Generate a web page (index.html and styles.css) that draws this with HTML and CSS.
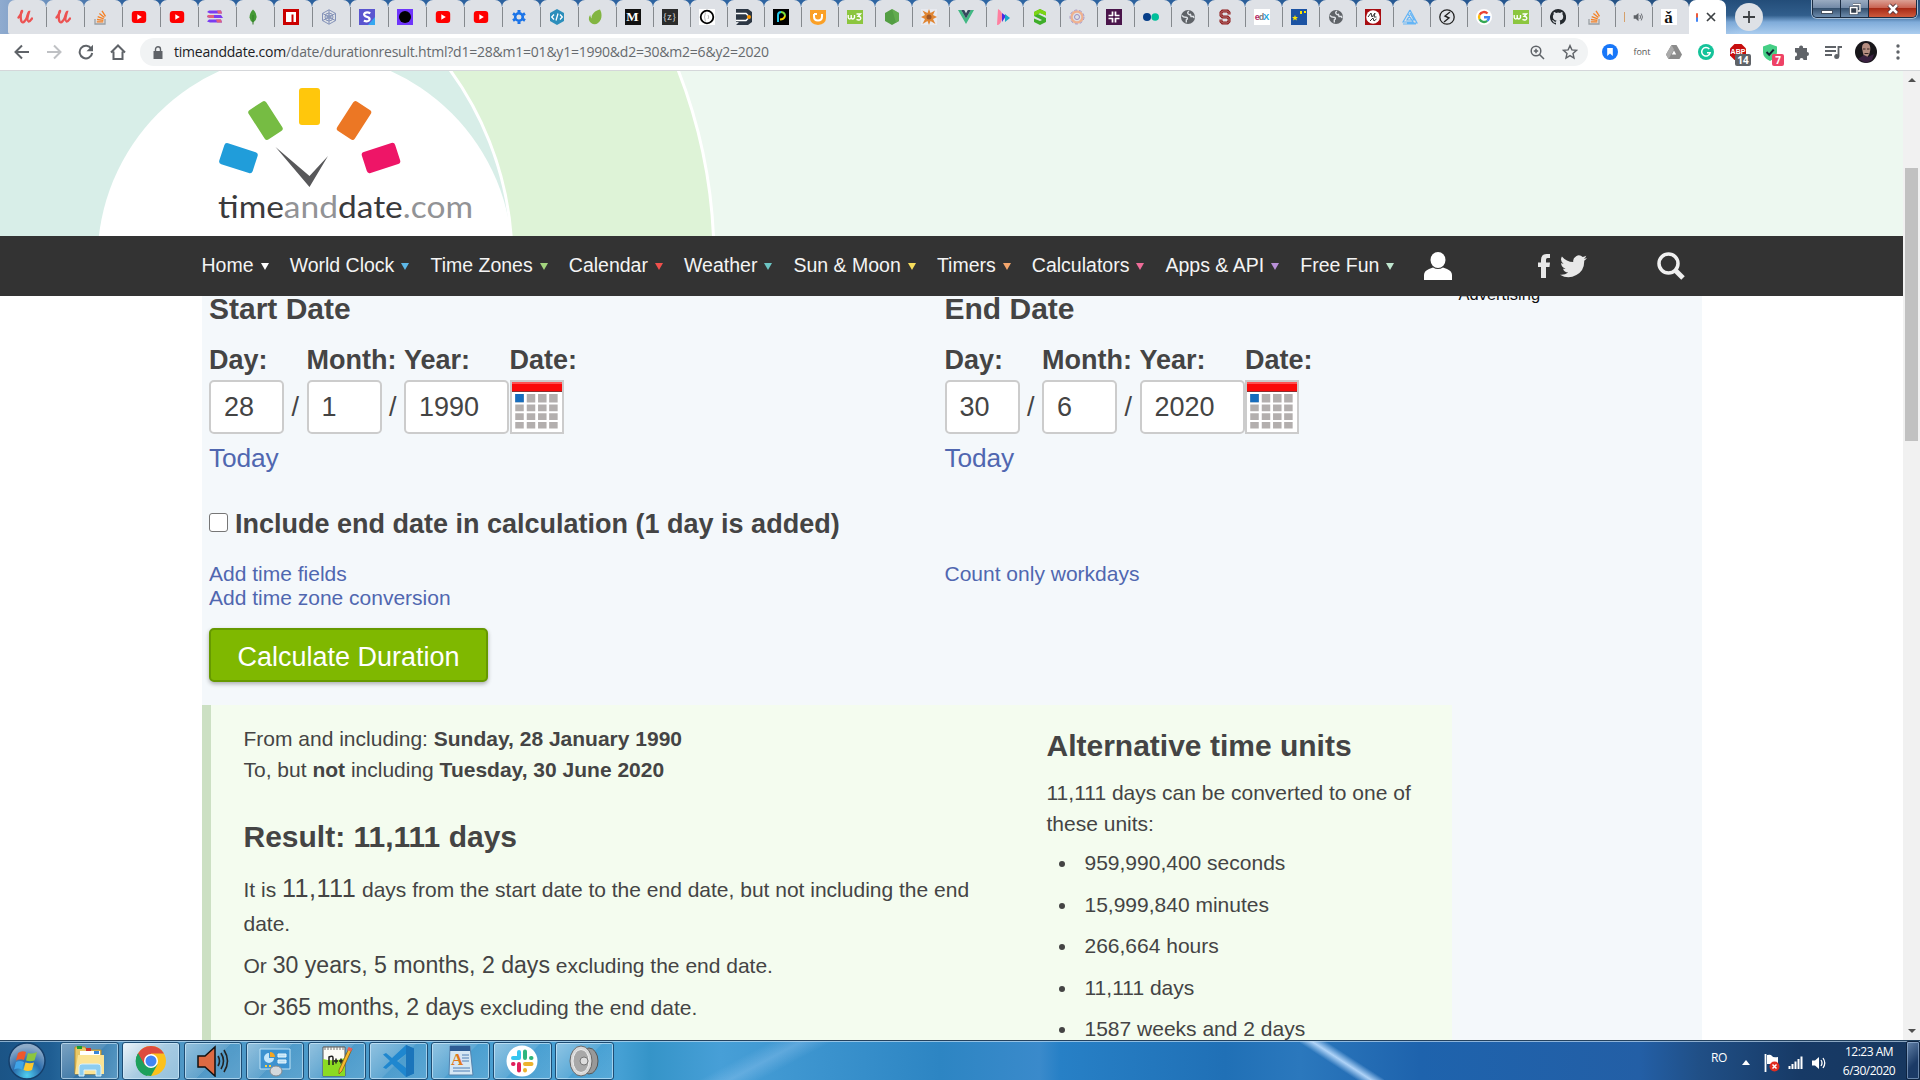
FILE: index.html
```html
<!DOCTYPE html>
<html lang="en">
<head>
<meta charset="utf-8">
<title>Date Duration Calculator</title>
<link rel="stylesheet" href="styles.css">
</head>
<body>
<svg class="sprite" width="0" height="0">
  <symbol id="udemy" viewBox="0 0 16 16"><path d="M1.500 8.500C4 5.500 5.500 2 5 1.800 4 1.800 3 9 4.500 12.500 6 15 9 11 10 8 11 5 11.500 3 12 3c-1.500 5-2 9-.5 9.500 1.500.3 2.500-1.500 3.500-3" fill="none" stroke="#ec5252" stroke-width="2.300" stroke-linecap="round"/></symbol>
  <symbol id="so" viewBox="0 0 16 16"><path d="M2 10v5h10v-5" fill="none" stroke="#9a9fa4" stroke-width="1.300"/><path d="M3.800 12.800h6.500M4 10.500l6.400.8M4.700 7.700l6 2.100M6.400 4.600l5 4M9 1.800l3.500 5.500" stroke="#f48024" stroke-width="1.300"/></symbol>
  <symbol id="yt" viewBox="0 0 16 16"><rect x=".8" y="2" width="14.400" height="12" rx="3" fill="#f00"/><path d="M6.300 5.300v5.400L10.800 8z" fill="#fff"/></symbol>
  <symbol id="w3" viewBox="0 0 16 16"><path d="M0 1h16v14H0z" fill="#8cc63f"/><path d="M1.200 6v2.500q.2 1.500 1.500 1.500T4.200 8.500V6v2.500Q4.500 10 5.700 10T7.500 8.500V6M9.500 5h4L11.200 7.300q2.800 0 2.500 2.400-1.200 2.300-4.200.6" fill="none" stroke="#fff" stroke-width="1.400"/></symbol>
  <symbol id="globe" viewBox="0 0 16 16"><circle cx="8" cy="8" r="7" fill="#5f6368"/><path d="M2 6.500q1.500 2 4 1.800 1.800 0 1.300 1.700l-1 .8v2.700M9 2.200q-2 1-1 2.500t2.500.8l.5 2h2.500l.5 1.500" fill="none" stroke="#dee1e6" stroke-width="1.400"/></symbol>
  <symbol id="vol" viewBox="0 0 16 16"><path d="M1 5.500h3L8 2v12l-4-3.500H1z" fill="currentColor"/><path d="M10 5q2 3 0 6M12 3q3.500 5 0 10" fill="none" stroke="currentColor" stroke-width="1.300"/></symbol>
</svg>

<div class="tabstrip">
  <div class="tabs">
    <div class="tab first"><svg class="fav"><use href="#udemy"/></svg></div>
    <div class="tab"><svg class="fav"><use href="#udemy"/></svg></div>
    <div class="tab"><svg class="fav"><use href="#so"/></svg></div>
    <div class="tab"><svg class="fav"><use href="#yt"/></svg></div>
    <div class="tab"><svg class="fav"><use href="#yt"/></svg></div>
    <div class="tab"><svg class="fav" viewBox="0 0 16 16"><path d="M2 1.500h12l1 3H3L0 3zM1 6h13l2 3H3L0 8zM2 10.500h12l1 3H3l-3-1z" fill="#7a3cf0"/><path d="M10 1.500h4l1 3h-4zM1 6h6v3H3L0 8zM9 10.500h5l1 3h-5z" fill="#e0607e"/></svg></div>
    <div class="tab"><svg class="fav" viewBox="0 0 16 16"><path d="M8 .5Q12 4 11.500 8.500 11 12 8 13.500 5 12 4.500 8.500 4.500 4 8 .5" fill="#439934"/><path d="M8 6v9.500" stroke="#337b28"/></svg></div>
    <div class="tab"><svg class="fav" viewBox="0 0 16 16"><path d="M0 0h16v16H0z" fill="#cb0000"/><path d="M3 3h10v10h-2.500V5.500H8.500V13H3z" fill="#fff"/></svg></div>
    <div class="tab"><svg class="fav" viewBox="0 0 16 16" fill="none" stroke="#8492b8"><path d="M8 .8l6.500 3.600v7.200L8 15.200l-6.500-3.600V4.400zM1.500 4.400l13 7.200M14.500 4.400l-13 7.200M8 .8v14.400"/><circle cx="8" cy="8" r="4"/><circle cx="8" cy="8" r="2"/></svg></div>
    <div class="tab"><svg class="fav" viewBox="0 0 16 16"><path d="M0 0h16v16H0z" fill="#5a55d0"/><path d="M9 16l7-8v8z" fill="#35a7f0"/><path d="M11.300 4.200Q8 2.500 6 4T6.500 7.300l3 1.200q2 1.500.5 3t-5.200.3" fill="none" stroke="#fff" stroke-width="2.200"/></svg></div>
    <div class="tab"><svg class="fav" viewBox="0 0 16 16"><path d="M0 0h16v16H0z" fill="#6f35fb"/><circle cx="8" cy="8" r="6"/></svg></div>
    <div class="tab"><svg class="fav"><use href="#yt"/></svg></div>
    <div class="tab"><svg class="fav"><use href="#yt"/></svg></div>
    <div class="tab"><svg class="fav" viewBox="0 0 16 16" fill="none" stroke="#1a73e8"><circle cx="8" cy="8" r="3.800" stroke-width="2.600"/><path d="M8 1v2.500M8 12.500V15M2 4.500l2 1.200M12 10.300l2 1.200M2 11.500l2-1.200M12 5.700l2-1.200" stroke-width="3"/></svg></div>
    <div class="tab"><svg class="fav" viewBox="0 0 16 16"><path d="M8 0l7 4v8l-7 4-7-4V4z" fill="#2c8ebb"/><path d="M5 5.500L2.700 8 5 10.500M11 5.500L13.300 8 11 10.500M9 4.500l-2 7" fill="none" stroke="#fff" stroke-width="1.300"/></svg></div>
    <div class="tab"><svg class="fav" viewBox="0 0 16 16"><path d="M13 0.500c2.500 4.500 2 10.500-2 13.500-3 2.500-8 .8-9-3-.5-3 .8-4.500 1.200-5 .3 1.500.6 2.500 1.300 3.500C4.500 5 8 1.500 13 .5" fill="#82b541"/></svg></div>
    <div class="tab"><span class="fav fav-m">M</span></div>
    <div class="tab"><span class="fav fav-z">{z}</span></div>
    <div class="tab"><svg class="fav" viewBox="0 0 16 16"><path d="M0 0h16v16H0z" fill="#fff"/><circle cx="8" cy="8" r="6.300" fill="none" stroke="#000" stroke-width="1.800"/><path d="M6.500 3.500Q4.500 8 6.500 12.500M9 6q1.500 2 0 4" fill="none" stroke="#bbb"/></svg></div>
    <div class="tab"><svg class="fav" viewBox="0 0 16 16"><path d="M0 0h12l4 3v10l-4 3H0l3-3H0z" fill="#2d3744"/><path d="M0 4.500h10l2 2M0 11.500h10l2-2" fill="none" stroke="#fff" stroke-width="1.500"/><circle cx="13" cy="8" r="2" fill="#f90"/></svg></div>
    <div class="tab"><svg class="fav" viewBox="0 0 16 16"><path d="M0 0h16v16H0z"/><path d="M5 13V6q0-3 3.500-3" fill="none" stroke="#24c6e8" stroke-width="2"/><path d="M8 3q4 .5 4 4" fill="none" stroke="#7ddc3a" stroke-width="2"/><path d="M12 7q-1 3.500-5 3.500" fill="none" stroke="#f8d400" stroke-width="2"/></svg></div>
    <div class="tab"><svg class="fav" viewBox="0 0 16 16"><path d="M0 1h16v8q0 6-8 7-8-1-8-7z" fill="#fba026"/><path d="M4 5v2.500q0 4 4 4t4-4V5M4 5h3" fill="none" stroke="#fff" stroke-width="2"/></svg></div>
    <div class="tab"><svg class="fav"><use href="#w3"/></svg></div>
    <div class="tab"><svg class="fav" viewBox="0 0 16 16"><path d="M8 0l7 4v8l-7 4-7-4V4z" fill="#539e43"/><path d="M8 0l7 4v8l-3 1.700z" fill="#6cb457" opacity=".6"/></svg></div>
    <div class="tab"><svg class="fav" viewBox="0 0 16 16"><path d="M0 0h16v16H0z" fill="#e8eaf0"/><path d="M8 0l1.500 4L14 1.500 12 6l4 2-4 2 2.500 5L9.500 12 8 16l-1.500-4L1.500 15 4 10 0 8l4-2L1.500 1.500 6.500 4z" fill="#e08532"/><circle cx="8" cy="8" r="2.500" fill="#9e5626"/></svg></div>
    <div class="tab"><svg class="fav" viewBox="0 0 16 16"><path d="M0 1h3.200L8 9.500 12.800 1H16L8 15z" fill="#41b883"/><path d="M3.200 1H6.200L8 4.300 9.800 1h3L8 9.500z" fill="#35495e"/></svg></div>
    <div class="tab"><svg class="fav" viewBox="0 0 16 16"><path d="M3 0q5 2 4 10-1.500 6-5 6z" fill="#ff7fa0"/><path d="M7 4l4 3-4 6z" fill="#4b2ee0"/><path d="M10 5l5 4-5 4z" fill="#16a7c9"/></svg></div>
    <div class="tab"><svg class="fav" viewBox="0 0 16 16"><path d="M8 0l6 3v3.500L8 4 6 5l8 4v4l-6 3-6-3V9.500L8 12l2-1-8-4V3z" fill="#3fae2a"/><path d="M8 0l6 3v3.500L8 4 2 7V3z" fill="#7dd414"/></svg></div>
    <div class="tab"><svg class="fav" viewBox="0 0 16 16" fill="none"><circle cx="8" cy="8" r="5.500" stroke="#efb190" stroke-width="2.400"/><circle cx="8" cy="8" r="7" stroke="#a99ac8" stroke-dasharray="3 2"/><circle cx="8" cy="8" r="2.500" stroke="#9c8cc0"/></svg></div>
    <div class="tab"><svg class="fav" viewBox="0 0 16 16"><path d="M0 0h16v16H0z" fill="#4a154b"/><path d="M6.500 2.500V7M9.500 9v4.500M9.500 2.500V7M6.500 9v4.500M2.500 6.500H7M9 9.500h4.500M9 6.500h4.500M2.500 9.500H7" stroke="#fff" stroke-width="1.700"/></svg></div>
    <div class="tab"><svg class="fav" viewBox="0 0 16 16"><circle cx="4" cy="8" r="4" fill="#063e89"/><circle cx="12.200" cy="8" r="3.800" fill="#00bf9a"/></svg></div>
    <div class="tab"><svg class="fav"><use href="#globe"/></svg></div>
    <div class="tab"><svg class="fav" viewBox="0 0 16 16"><path d="M12 5.500V3.500L10.500 2h-5L4 3.500v3L5.500 8h5L12 9.500v3L10.500 14h-5L4 12.500v-2" fill="none" stroke="#8c1515" stroke-width="3"/><path d="M12 5.500V3.500L10.500 2h-5L4 3.500v3L5.500 8h5L12 9.500v3L10.500 14h-5L4 12.500v-2" fill="none" stroke="#d9c6c8" stroke-width=".6"/></svg></div>
    <div class="tab"><span class="fav fav-edx"><i>e</i><b>d</b><u>X</u></span></div>
    <div class="tab"><svg class="fav" viewBox="0 0 16 16"><path d="M0 0h16v16H0z" fill="#1c53a3"/><path d="M4 6l.8 2H7L5.300 9.400 6 11.500 4 10.200 2 11.500l.7-2.100L1 8h2.200zM9 2h2v3H9zM13 2h2v2h-2z" fill="#ffe600"/></svg></div>
    <div class="tab"><svg class="fav"><use href="#globe"/></svg></div>
    <div class="tab"><svg class="fav" viewBox="0 0 16 16"><path d="M0 0h16v16H0z" fill="#a80d12"/><circle cx="8" cy="8" r="6.800" fill="#fff"/><path d="M3 8l3-4 1 4 3-4-1 4h2.500M5 12l3-3 1 3 2.500-2" fill="none" stroke="#333" stroke-width="1"/></svg></div>
    <div class="tab"><svg class="fav" viewBox="0 0 16 16" fill="none" stroke="#64b5f6" stroke-width="1.200"><path d="M8 1L1 13h10L6 5M8 1l7 13H5M8 6l-3 5h7L8 4M1 15h13"/></svg></div>
    <div class="tab"><svg class="fav" viewBox="0 0 16 16" fill="none" stroke="#222"><circle cx="8" cy="8" r="7.200" stroke-width="1.300"/><path d="M11 3L6 7l4 2-5 4" stroke-width="1.400"/></svg></div>
    <div class="tab"><svg class="fav" viewBox="0 0 16 16" fill="none" stroke-width="2.400"><circle cx="8" cy="8" r="8" fill="#fff"/><path d="M11.500 4.500A5 5 0 003.600 5.700" stroke="#ea4335"/><path d="M3.600 5.700a5 5 0 000 4.600" stroke="#fbbc05"/><path d="M3.600 10.300a5 5 0 007.600 1.500" stroke="#34a853"/><path d="M11.200 11.800Q13 10.500 13 8.200H8" stroke="#4285f4"/></svg></div>
    <div class="tab"><svg class="fav"><use href="#w3"/></svg></div>
    <div class="tab"><svg class="fav" viewBox="0 0 16 16"><path d="M8 0a8 8 0 00-2.500 15.600c.4.100.5-.2.500-.4v-1.500c-2.200.5-2.700-1-2.700-1-.4-.9-.9-1.200-.9-1.200-.7-.5.1-.5.100-.5.800.1 1.200.8 1.200.8.700 1.300 1.900.9 2.400.7 0-.5.200-.9.500-1.100-1.800-.2-3.700-.9-3.700-4 0-.9.300-1.600.9-2.200-.1-.2-.4-1 .1-2.100 0 0 .7-.2 2.200.8a7.500 7.500 0 014 0c1.500-1 2.200-.8 2.200-.8.400 1.100.1 1.900.1 2.100.5.600.8 1.300.8 2.200 0 3.100-1.900 3.700-3.700 3.900.3.300.6.800.6 1.500v2.400c0 .2.100.5.500.4A8 8 0 008 0" fill="#24292e"/></svg></div>
    <div class="tab"><svg class="fav"><use href="#so"/></svg></div>
    <div class="tab audio"><i class="sliver"></i><svg class="volume" width="11" height="12"><use href="#vol"/></svg></div>
    <div class="tab"><span class="fav fav-a">ǎ</span></div>
    <div class="tab active"><i class="arc"></i><svg width="10" height="10" viewBox="0 0 10 10"><path d="M1 1l8 8M9 1L1 9" stroke="#3c4043" stroke-width="1.700"/></svg></div>
  </div>
  <div class="newtab"><svg width="12" height="12" viewBox="0 0 12 12"><path d="M6 0v12M0 6h12" stroke="#3c4043" stroke-width="1.800"/></svg></div>
  <div class="winctl">
    <span class="wbtn min"><i></i></span>
    <span class="wbtn max"><svg width="12" height="12" viewBox="0 0 12 12" fill="none"><path d="M4 1.500h7v6.500H9M1.500 4.500H8v6H1.500zM4 6.700h1.600v1.600H4z" stroke="#333e4d" stroke-width="2.500"/><path d="M4 1.500h7v6.500H9M1.500 4.500H8v6H1.500z" stroke="#fff" stroke-width="1.400"/></svg></span>
    <span class="wbtn close"><svg width="14" height="12" viewBox="0 0 14 12"><path d="M3 2l8 8M11 2l-8 8" stroke="#53333a" stroke-width="4.500"/><path d="M3 2l8 8M11 2l-8 8" stroke="#fff" stroke-width="2.500"/></svg></span>
  </div>
</div>

<div class="toolbar">
  <div class="navbtns">
    <svg width="16" height="16" viewBox="0 0 16 16" fill="none" stroke="#5f6368" stroke-width="2"><path d="M15 8H2M8 1.500L1.500 8 8 14.500"/></svg>
    <svg width="16" height="16" viewBox="0 0 16 16" fill="none" stroke="#bfc1c4" stroke-width="2"><path d="M1 8h13M8 1.500L14.500 8 8 14.500"/></svg>
    <svg width="16" height="16" viewBox="0 0 16 16"><path d="M13.300 4.700A6.300 6.300 0 1014.200 9" fill="none" stroke="#5f6368" stroke-width="2"/><path d="M15 .8v6.500H8.500z" fill="#5f6368"/></svg>
    <svg width="16" height="16" viewBox="0 0 16 16" fill="none" stroke="#5f6368" stroke-width="2"><path d="M1 8.500l7-7 7 7M3.500 7.500V15h9V7.500"/></svg>
  </div>
  <div class="omnibox">
    <svg class="lock" width="10" height="13" viewBox="0 0 10 13"><path d="M.5 5h9v8h-9z" fill="#5f6368"/><path d="M2.500 5V3.300a2.500 2.500 0 015 0V5" fill="none" stroke="#5f6368" stroke-width="1.400"/></svg>
    <span class="url"><b>timeanddate.com</b>/date/durationresult.html?d1=28&amp;m1=01&amp;y1=1990&amp;d2=30&amp;m2=6&amp;y2=2020</span>
    <svg width="15" height="15" viewBox="0 0 15 15" fill="none" stroke="#5f6368" stroke-width="1.500"><circle cx="6" cy="6" r="4.800"/><path d="M9.500 9.500l4.500 4.500M6 3.800v4.400M3.800 6h4.400"/></svg>
    <svg class="star" width="16" height="16" viewBox="0 0 16 16"><path d="M8 1.600l1.900 4.300 4.600.4L11 9.400l1 4.600-4-2.400L4 14l1-4.600L1.500 6.300l4.600-.4z" fill="none" stroke="#5f6368" stroke-width="1.400"/></svg>
  </div>
  <div class="extensions">
    <span class="ext"><svg width="16" height="16" viewBox="0 0 16 16"><circle cx="8" cy="8" r="8" fill="#1877f9"/><path d="M5.200 4h5.600v8L8 9.500 5.200 12z" fill="#fff"/></svg></span>
    <span class="ext fontext">font</span>
    <span class="ext"><svg width="16" height="14" viewBox="0 0 16 14"><path d="M5.500 0h5L16 9.500 13.500 14h-11L0 9.500z" fill="#8b8b8b"/><path d="M5.500 0L0 9.500 2.500 14 8 4.500z" fill="#aaa"/><path d="M8 5.500l2.200 4H5.800z" fill="#fff"/></svg></span>
    <span class="ext"><svg width="16" height="16" viewBox="0 0 16 16"><circle cx="8" cy="8" r="8" fill="#15c39a"/><path d="M11.300 5A4.300 4.300 0 1012.200 8.800H9" fill="none" stroke="#fff" stroke-width="1.500"/></svg></span>
    <span class="ext"><svg width="18" height="16" viewBox="0 0 18 16"><path d="M5.500 0h7L17 4.500v7L12.500 16h-7L1 11.500v-7z" fill="#c70d0d"/><text x="9" y="10" class="abp">ABP</text></svg><em class="badge grey">14</em></span>
    <span class="ext"><svg width="16" height="17" viewBox="0 0 16 17"><path d="M1 2.500L8 0l7 2.500V8q0 6-7 9-7-3-7-9z" fill="#45cf85"/><path d="M4.500 8l2.700 2.700 4.500-5" fill="none" stroke="#123" stroke-width="2"/></svg><em class="badge pink">7</em></span>
    <span class="ext"><svg width="16" height="16" viewBox="0 0 16 16"><path d="M1 4h4.200a2 2 0 113.800 0H13v4a2 2 0 110 4v4H9.500a2 2 0 10-4 0H1v-3.500a2 2 0 100-4.200z" fill="#5f6368"/></svg></span>
    <span class="ext"><svg width="18" height="15" viewBox="0 0 18 15"><path d="M0 2h11M0 6h11M0 10h7M13.500 11.500V2H17" fill="none" stroke="#5f6368" stroke-width="1.800"/><circle cx="11.700" cy="11.500" r="2.500" fill="#5f6368"/></svg></span>
    <span class="ext"><svg width="22" height="22" viewBox="0 0 22 22"><circle cx="11" cy="11" r="11" fill="#18161a"/><path d="M7 7q0-5 4-5t4.300 5-3 9-5.300-9" fill="#b58d80"/><path d="M3 18l6-4 4 2 6-3-2 6-6 3z" fill="#3a2140"/><path d="M8 8h2.500M12 8h2.500M9.500 12.500h4" stroke="#372623"/></svg></span>
    <span class="ext"><svg width="4" height="16" viewBox="0 0 4 16" fill="#5f6368"><circle cx="2" cy="2" r="1.700"/><circle cx="2" cy="8" r="1.700"/><circle cx="2" cy="14" r="1.700"/></svg></span>
  </div>
</div>

<div class="viewport">
  <div class="page">
    <header class="banner">
      <svg width="1903" height="165" viewBox="0 71 1903 165">
        <path d="M0 71h1903v165H0z" fill="#edf8f0"/>
        <circle cx="193" cy="260" r="521" fill="#def3d7" stroke="#fff" stroke-width="3"/>
        <circle cx="190" cy="260" r="322" fill="#d8eee8" stroke="#fff" stroke-width="3"/>
        <circle cx="305" cy="260" r="207.500" fill="#fff"/>
        <rect x="299" y="88" width="21" height="37" rx="3" fill="#ffc70c"/>
        <rect x="255" y="103" width="21" height="35" rx="3" fill="#76bc43" transform="rotate(-33 265.500 120.500)"/>
        <rect x="343.500" y="103" width="21" height="35" rx="3" fill="#ec7724" transform="rotate(33 354 120.500)"/>
        <rect x="221" y="147" width="35" height="22" rx="3" fill="#209dda" transform="rotate(18 238 158)"/>
        <rect x="363.500" y="147" width="35" height="22" rx="3" fill="#ee1567" transform="rotate(-18 381 158)"/>
        <path d="M275.500 147l34 29 18.500-20-18.500 31z" fill="#58585a"/>
        <text x="218" y="218" class="logotext" textLength="255" lengthAdjust="spacingAndGlyphs"><tspan class="dark">time</tspan>and<tspan class="dark">date</tspan>.com</text>
      </svg>
    </header>
    <nav class="mainnav">
      <a class="item">Home<i class="c-white"></i></a>
      <a class="item">World Clock<i class="c-blue"></i></a>
      <a class="item">Time Zones<i class="c-green"></i></a>
      <a class="item">Calendar<i class="c-red"></i></a>
      <a class="item">Weather<i class="c-teal"></i></a>
      <a class="item">Sun &amp; Moon<i class="c-yellow"></i></a>
      <a class="item">Timers<i class="c-orange"></i></a>
      <a class="item">Calculators<i class="c-pink"></i></a>
      <a class="item">Apps &amp; API<i class="c-violet"></i></a>
      <a class="item">Free Fun<i class="c-mint"></i></a>
      <svg class="user" width="28" height="28" viewBox="0 0 28 28" fill="#fff"><ellipse cx="14" cy="8" rx="7.500" ry="8"/><path d="M0 28v-5q0-4 5-6l4-1.500q5 3 10 0l4 1.500q5 2 5 6v5z"/></svg>
      <svg class="fb" width="12" height="24" viewBox="0 0 12 24" fill="#e8e8e8"><path d="M3 24V13H0V8.500h3V6q0-6 5.500-6H12v4H9.500Q8 4 8 5.800v2.700h4L11.500 13H8v11z"/></svg>
      <svg class="tw" width="27" height="23" viewBox="0 0 24 20" fill="#e8e8e8"><path d="M24 2.400a10 10 0 01-2.800.8A5 5 0 0023.300.4a10 10 0 01-3.100 1.200 5 5 0 00-8.400 4.500A14 14 0 011.700 1a5 5 0 001.500 6.500 5 5 0 01-2.200-.6 5 5 0 003.900 4.900 5 5 0 01-2.200.1 5 5 0 004.600 3.400A10 10 0 010 17.300 14 14 0 0021.500 4.900 10 10 0 0024 2.400"/></svg>
      <svg class="search" width="28" height="28" viewBox="0 0 28 28" fill="none" stroke="#f0f0f0"><circle cx="11.500" cy="11.500" r="9.500" stroke-width="3.500"/><path d="M18.500 18.500l7.500 7.500" stroke-width="5"/></svg>
    </nav>
    <main class="content">
      <aside class="advert">Advertising</aside>
      <form class="durform">
        <section class="datecol">
          <h2>Start Date</h2>
          <div class="fields">
            <label>Day:</label><label>Month:</label><label>Year:</label><label>Date:</label>
            <span class="box">28</span><span class="box slash">1</span><span class="box slash">1990</span>
            <svg class="cal" width="54" height="54" viewBox="0 0 54 54"><use href="#calendar"/></svg>
          </div>
          <a class="today">Today</a>
        </section>
        <section class="datecol">
          <h2>End Date</h2>
          <div class="fields">
            <label>Day:</label><label>Month:</label><label>Year:</label><label>Date:</label>
            <span class="box">30</span><span class="box slash">6</span><span class="box slash">2020</span>
            <svg class="cal" width="54" height="54" viewBox="0 0 54 54">
              <g id="calendar"><path d="M1 1h52v52H1z" fill="#fff" stroke="#ccc" stroke-width="2"/><path d="M2 2h50v10H2z" fill="#fa0a0a"/><path d="M2 2h50v2H2z" fill="#ff5050"/><path d="M2 11h50v1H2z" fill="#8a2f2f"/>
              <path d="M9.500 14v34.500M21 14v34.500M32.300 14v34.500M43.400 14v34.500" stroke="#b3afae" stroke-width="8.500"/><path d="M5.200 14h8.600v8.500H5.200z" fill="#176dbd"/><path d="M2 23.400h50M2 32.200h50M2 41h50" stroke="#fff" stroke-width="2"/></g>
            </svg>
          </div>
          <a class="today">Today</a>
        </section>
        <div class="include"><i class="check"></i><span>Include end date in calculation (1 day is added)</span></div>
        <div class="links"><a>Add time fields</a><a>Add time zone conversion</a></div>
        <div class="links"><a>Count only workdays</a></div>
        <button class="calc" type="button">Calculate Duration</button>
      </form>
      <section class="result">
        <div class="left">
          <p class="span">From and including: <b>Sunday, 28 January 1990</b><br>To, but <b>not</b> including <b>Tuesday, 30 June 2020</b></p>
          <h2>Result: 11,111 days</h2>
          <p class="line">It is <big>11,111</big> days from the start date to the end date, but not including the end date.</p>
          <p class="line">Or <span class="lg">30 years, 5 months, 2 days</span> excluding the end date.</p>
          <p class="line">Or <span class="lg">365 months, 2 days</span> excluding the end date.</p>
        </div>
        <div class="right">
          <h2>Alternative time units</h2>
          <p>11,111 days can be converted to one of these units:</p>
          <ul>
            <li>959,990,400 seconds</li>
            <li>15,999,840 minutes</li>
            <li>266,664 hours</li>
            <li>11,111 days</li>
            <li>1587 weeks and 2 days</li>
          </ul>
        </div>
      </section>
    </main>
  </div>
  <div class="scrollbar"><i class="up"></i><i class="thumb"></i><i class="down"></i></div>
</div>

<footer class="taskbar">
  <svg class="orb" width="38" height="38" viewBox="0 0 38 38">
    <defs><radialGradient id="og" cx=".5" cy=".9" r=".8"><stop offset="0" stop-color="#4fd0f0"/><stop offset=".5" stop-color="#2a6cad"/><stop offset="1" stop-color="#8fabc8"/></radialGradient></defs>
    <circle cx="19" cy="19" r="18" fill="url(#og)" stroke="#153f6b" stroke-width="1.500"/>
    <path d="M10 11q4-3 8-1l-2 8q-4-1.500-8 .5z" fill="#f0582a"/><path d="M20 11q4 1.500 9-1l-2.500 8.500Q22 20 18 18.500z" fill="#8cc63e"/><path d="M8 20q4-2 8 0l-2 7.500q-4-2-8 0z" fill="#3fa4e8"/><path d="M17.500 20.500q4 1.500 8.500 0l-2 7.500q-4 2-8.500 0z" fill="#fdc72e"/>
  </svg>
  <span class="task"><svg width="34" height="32" viewBox="0 0 34 32"><path d="M3 2h10l2 3h14v24H3z" fill="#eac866" stroke="#b98d2c"/><path d="M8 6h20v4H8z" fill="#fff"/><path d="M6 10h26v19H3z" fill="#fbe394"/><path d="M5 1h5v3H5z" fill="#1a9d30"/><path d="M14 3h5v3h-5z" fill="#cc332b"/><path d="M22 6h5v3h-5z" fill="#3a87d8"/><path d="M7 31v-9q0-3 3-3h16q3 0 3 3v9h-5v-6H12v6z" fill="#8ccdf0" stroke="#d9f1fb"/></svg></span>
  <span class="task on"><svg width="32" height="32" viewBox="0 0 32 32"><circle cx="16" cy="16" r="15" fill="#fbc11c"/><path d="M16 16L3 8.500A15 15 0 0129 8.500H16z" fill="#dd4b3e"/><path d="M3 8.500A15 15 0 0016 31l6.500-11.500L16 16z" fill="#1da05c"/><path d="M3 8.500L9.500 20 16 16V8.500z" fill="#dd4b3e"/><path d="M3 8.500l6.500 11.200L16 23l-4 8A15 15 0 013 8.500" fill="#1da05c"/><circle cx="16" cy="16" r="7" fill="#fff"/><circle cx="16" cy="16" r="5.500" fill="#4285f4"/></svg></span>
  <span class="task"><svg width="32" height="32" viewBox="0 0 32 32"><path d="M1 11h7l10-9v29L8 22H1z" fill="#dc6a43" stroke="#111" stroke-width="1.500"/><path d="M21 11q3 5 0 10M24 8q5 8 0 16M27 5q7 11 0 22" fill="none" stroke="#222" stroke-width="1.600"/></svg></span>
  <span class="task"><svg width="32" height="32" viewBox="0 0 32 32"><path d="M1 4h30v20H1z" fill="#3c92d0" stroke="#bfe3f6"/><path d="M10 8a5 5 0 105 5h-5z" fill="#c4e6fa"/><path d="M11 7a5 5 0 015 5h-5z" fill="#f5a623"/><path d="M19 9h8v3h-8zM19 15h8v3h-8z" fill="#b9dff5" stroke="#e9f6fc"/><path d="M6 20h2v2H6zM10 20h2v2h-2z" fill="#ffd23e"/><ellipse cx="17" cy="26" rx="6" ry="5" fill="#d4d8dc" stroke="#84898f"/></svg></span>
  <span class="task"><svg width="32" height="34" viewBox="0 0 32 34"><path d="M2 3h22v29H2z" fill="#fcfcf6" stroke="#555"/><path d="M2 15q11 3 22-1v18H2z" fill="#8bdb22"/><path d="M4 2v4M7 2v4M10 2v4M13 2v4M16 2v4M19 2v4M22 2v4" stroke="#777"/><path d="M8 21v-8q4-2 4 1v7M13 17h4M15 14.500v5M18 17h4M20 14.500v5" fill="none" stroke="#222" stroke-width="1.500"/><path d="M28 4l3 1-10 22-3 3v-4z" fill="#f7b92c" stroke="#80601a" stroke-width=".8"/><path d="M27.500 3l4 1.500-1.500 3-4-1.500z" fill="#e8605a"/></svg></span>
  <span class="task"><svg width="32" height="32" viewBox="0 0 32 32"><path d="M23 0l8 3.500v25L23 32 9 19l-6 5-3-1.500L7 16 0 9.500 3 8l6 5zM23 9l-9 7 9 7z" fill="#1f87cf" fill-rule="evenodd"/><path d="M23 0l8 3.500v25L23 32z" fill="#1b75bb"/></svg></span>
  <span class="task"><svg width="28" height="32" viewBox="0 0 28 32"><path d="M3 1h20l3 29H2z" fill="#d5e7f4" stroke="#5482ad"/><path d="M3 1h20v5H3z" fill="#2d5c94"/><path d="M15 10h7M15 13h7M15 16h7M6 23h17M6 26h17" stroke="#4e7fb5"/><text x="4" y="20" class="wp">A</text></svg></span>
  <span class="task"><svg width="32" height="32" viewBox="0 0 32 32"><circle cx="16" cy="16" r="15.500" fill="#fff"/><g fill="none" stroke-width="4" stroke-linecap="round"><path d="M13 7v6M7 13h6" stroke="#36c5f0"/><path d="M19 6.500V13M25 13h.5" stroke="#2eb67d"/><path d="M19 19h6.500M19 25v.5" stroke="#ecb22e"/><path d="M13 19v6.500M7 19h.5" stroke="#e01e5a"/></g></svg></span>
  <span class="task"><svg width="30" height="32" viewBox="0 0 30 32"><ellipse cx="20" cy="16" rx="9" ry="13" fill="#999" stroke="#555"/><ellipse cx="12" cy="16" rx="11" ry="15" fill="#d8d8d8" stroke="#686868"/><ellipse cx="12" cy="16" rx="8" ry="11.500" fill="#a8a8a8" stroke="#eee"/><circle cx="15" cy="16" r="4" fill="#ddd" stroke="#777"/></svg></span>
  <div class="tray">
    <span class="lang">RO</span>
    <i class="more"></i>
    <svg class="flag" width="16" height="18" viewBox="0 0 16 18"><path d="M1.500 0v18" stroke="#fff" stroke-width="1.800"/><path d="M3 1q4-1 5 1t6 1v7H3z" fill="#fff"/><circle cx="10.500" cy="12.500" r="5" fill="#e02d20"/><path d="M8.500 10.500l4 4M12.500 10.500l-4 4" stroke="#fff" stroke-width="1.500"/></svg>
    <svg class="bars" width="16" height="13" viewBox="0 0 16 13"><path d="M1.500 10v3M4.500 8v5M7.500 5.500V13M10.500 3v10M13.500.5V13" stroke="#fff" stroke-width="2"/></svg>
    <svg class="vol" width="16" height="16"><use href="#vol"/></svg>
    <div class="clock"><span>12:23 AM</span><span>6/30/2020</span></div>
    <i class="desk"></i>
  </div>
</footer>
</body>
</html>
```
FILE: styles.css
```css
* { box-sizing: border-box; }
body { margin: 0; width: 1920px; height: 1080px; overflow: hidden; display: flex; flex-direction: column; background: #fff; font-family: "Liberation Sans", Arial, sans-serif; color: #444; }
h2, p, ul { margin: 0; padding: 0; }
svg { display: block; flex: none; }
.sprite { position: absolute; }

/* tab strip */
.tabstrip { height: 34px; flex: none; display: flex; padding-left: 8px; background: linear-gradient(90deg, #8fabcf 0, #2b5f9c 130px, #2f66a3 1000px, #26568f 1500px, transparent 1740px), linear-gradient(#234d79 0, #315e8c 45%, #7fabd9 65%, #abcdef 100%); }
.tabs { display: flex; }
.tab { width: 37px; height: 34px; position: relative; display: flex; align-items: center; justify-content: center; padding-right: 4px; background: #dee1e6; border-radius: 7px 7px 0 0; }
.tab:nth-child(-n+16) { width: 38px; }
.tab::after { content: ""; position: absolute; right: -1px; top: 7px; width: 1px; height: 20px; background: #85898e; z-index: 1; }
.tab.first { border-bottom-left-radius: 2px; }
.tab:nth-child(n+45)::after { display: none; }
.tab.active { background: #fff; gap: 8px; }
.arc { width: 2px; height: 9px; border-radius: 2px; background: linear-gradient(#ee5a3a 40%, #4285f4 60%); }
.tab.audio { gap: 8px; color: #5f6368; padding-right: 0; }
.sliver { width: 1px; height: 10px; background: #d5a06b; }
.fav { width: 16px; height: 16px; display: block; text-align: center; }
.fav-m { background: #111; color: #fff; font: bold 13px/16px "Liberation Serif", serif; }
.fav-z { background: #2b2b2b; color: #ddd; font: 10px/15px "Liberation Serif", serif; }
.fav-edx { background: #fff; font: bold 9px/16px "Liberation Sans", sans-serif; letter-spacing: -1px; }
.fav-edx i { color: #b52a67; font-style: normal; }
.fav-edx b { color: #777; }
.fav-edx u { color: #22a5dd; text-decoration: none; }
.fav-a { background: #fff; color: #111; font: bold 17px/18px "Liberation Serif", serif; }
.newtab { width: 28px; height: 28px; margin: 3px 0 0 9px; border-radius: 50%; background: #dee1e6; display: flex; align-items: center; justify-content: center; }
.winctl { display: flex; height: 18px; margin-left: auto; margin-right: 3px; border: 1px solid #1b2c42; border-top: 0; border-radius: 0 0 5px 5px; overflow: hidden; box-shadow: 0 0 0 1px #a5bcd4; }
.wbtn { width: 28px; display: flex; align-items: center; justify-content: center; border-right: 1px solid #1b2c42; background: linear-gradient(#9aabc1, #7188a6 48%, #36516f 50%, #6c8bad); }
.wbtn.min i { width: 12px; height: 4px; background: #fff; border: 1px solid #444f5f; margin-top: 6px; }
.wbtn.close { width: 47px; border: 0; background: linear-gradient(#dca094, #c8604e 48%, #a82a15 50%, #ce5a3c); }

/* toolbar */
.toolbar { height: 37px; flex: none; display: flex; align-items: center; border-bottom: 1px solid #d5d7da; background: #fff; }
.navbtns { display: flex; gap: 16px; padding-left: 14px; width: 140px; }
.omnibox { width: 1448px; height: 28px; border-radius: 14px; background: #f1f3f4; display: flex; align-items: center; padding: 0 10px 0 13px; margin-right: 6px; }
.url { margin-left: 11px; margin-right: auto; font: 14px/20px "Open Sans", "Noto Sans", sans-serif; letter-spacing: -.22px; color: #666a6e; white-space: nowrap; }
.url b { font-weight: 400; color: #202124; }
.star { margin-left: 17px; }
.extensions { display: flex; }
.ext { width: 32px; height: 28px; position: relative; display: flex; align-items: center; justify-content: center; }
.fontext { font: 9px "Open Sans", sans-serif; color: #555; padding-bottom: 2px; }
.abp { font: bold 7px "Liberation Sans", sans-serif; fill: #fff; text-anchor: middle; }
.badge { position: absolute; left: 13px; top: 16px; width: 16px; height: 12px; border-radius: 2px; color: #fff; font: bold 10px/12px "Open Sans", sans-serif; text-align: center; }
.badge.grey { background: #5f6368; }
.badge.pink { background: #ee4266; width: 12px; left: 18px; }

/* viewport */
.viewport { flex: 1; min-height: 0; display: flex; overflow: hidden; }
.page { width: 1903px; overflow: hidden; }
.logotext { font: 400 31px Lato, "Open Sans", sans-serif; fill: #929396; }
.logotext .dark { fill: #3a3a3c; }
.mainnav { height: 60px; background: #333; display: flex; align-items: center; padding-left: 201.500px; color: #f4f4f4; font-size: 19.500px; line-height: 24px; white-space: nowrap; }
.item { display: flex; align-items: center; margin-right: 21.100px; padding-bottom: 2px; }
.item i { margin: 3px 0 0 7px; border: 4px solid transparent; border-top: 7px solid; border-bottom: 0; }
.c-white { color: #fff; } .c-blue { color: #5db8e8; } .c-green { color: #a4d67f; } .c-red { color: #f0504c; } .c-teal { color: #6cc5c4; }
.c-yellow { color: #f8de5c; } .c-orange { color: #f4a66c; } .c-pink { color: #ee6c98; } .c-violet { color: #b990d8; } .c-mint { color: #bfe6cf; }
.user { margin-left: 9px; }
.fb { margin-left: 86px; }
.tw { margin-left: 10px; }
.search { margin-left: 70px; }

.content { width: 1500px; height: 744px; margin-left: 202px; background: #f4f8fb; position: relative; overflow: hidden; }
.advert { position: absolute; left: 1256.500px; top: -11px; font-size: 16.500px; line-height: 18px; color: #111; }
.durform { height: 409px; padding-left: 7px; display: grid; grid-template-columns: 735.500px 1fr; grid-template-rows: 177px 66px 71px 1fr; }
h2 { font-size: 30px; font-weight: 700; }
.datecol h2 { line-height: 25px; }
.fields { display: grid; grid-template-columns: 97.500px 97.500px 105.500px 60px; margin-top: 24px; row-gap: 5px; align-items: center; }
.fields label { font-size: 27px; font-weight: 700; line-height: 30px; }
.box { position: relative; width: 75px; height: 54px; border: 2px solid #ccc; border-radius: 5px; background: #fff; padding-left: 13px; font-size: 27px; line-height: 51px; }
.box:nth-child(7) { width: 105px; }
.slash::before { content: "/"; position: absolute; left: -17px; top: 0; }
.cal { width: 54px; }
.today { display: block; margin-top: 9px; font-size: 26.300px; line-height: 30px; letter-spacing: -.1px; }
a { color: #5067b0; }
.mainnav a { color: inherit; }
.mainnav .item i { border-top-color: currentColor; }
.include { grid-column: 1 / 3; display: flex; padding-top: 36px; font-size: 27px; font-weight: 700; line-height: 30px; }
.check { width: 19px; height: 19px; margin: 4px 7px 0 0; border: 1px solid #767676; border-radius: 3px; background: #fff; }
.links { padding-top: 23px; display: flex; flex-direction: column; font-size: 21px; line-height: 24px; }
.calc { width: 279px; height: 54px; margin: 18px 0 0; padding: 3px 0 0; border: 2px solid #690; border-radius: 5px; background: #7fb800; color: #fff; font: 27px/46px "Liberation Sans", Arial, sans-serif; box-shadow: 0 2px 4px rgba(0,0,0,.3); }

.result { width: 1250px; height: 335px; border-left: 9px solid #cce0c3; background: #f4fcef; display: grid; grid-template-columns: 771px 375px; column-gap: 32px; padding-left: 32.500px; font-size: 21px; line-height: 31px; }
.result h2 { line-height: 36px; }
.left { padding-top: 18px; }
.left h2 { margin-top: 34px; margin-bottom: 16px; }
.line { line-height: 34px; margin-bottom: 7px; }
.line big { font-size: 25.200px; letter-spacing: .45px; }
.lg { font-size: 23.100px; }
.right { padding-top: 22.500px; }
.right p { margin-top: 13.500px; }
.right ul { margin-top: 8px; padding-left: 38px; list-style: none; }
.right li { margin-bottom: 10.500px; display: flex; align-items: center; }
.right li::before { content: ""; width: 6px; height: 6px; border-radius: 50%; background: #444; margin: 3px 20px 0 -26px; }

.scrollbar { width: 17px; background: #f1f1f1; display: flex; flex-direction: column; align-items: center; padding: 7px 0; }
.scrollbar .up { border: 4px solid transparent; border-top: 0; border-bottom: 4px solid #505050; }
.scrollbar .down { margin-top: auto; border: 4px solid transparent; border-bottom: 0; border-top: 4px solid #505050; }
.thumb { width: 13px; height: 273px; margin-top: 86px; background: #c1c1c1; }

/* taskbar */
.taskbar { height: 40px; flex: none; display: flex; align-items: center; border-top: 1px solid #24425f; box-shadow: inset 0 1px rgba(200,225,245,.65); padding-left: 8px;
  background: linear-gradient(152deg, transparent 35%, rgba(190,220,255,.25) 50%, transparent 65%) 700px 0 / 130px 40px no-repeat,
    linear-gradient(33deg, transparent 40%, rgba(190,222,255,.9) 50%, transparent 60%) 1300px 0 / 84px 40px no-repeat,
    linear-gradient(90deg, #1b5486 0, #1e5d92 50px, #4f96c4 130px, #45a0d4 620px, #3594c8 650px, #479fd7 720px, #2d85c3 940px, #3a8acb 1040px, #2780c6 1060px, #2070b6 1225px, #2b78bd 1300px, #1e63ad 1420px, #235fa6 1640px, #204f86 1700px, #173a66 1800px, #17375f 1920px); }
.orb { margin-right: 14px; }
.task { width: 58.500px; height: 38px; margin-right: 3.400px; display: flex; align-items: center; justify-content: center; border: 1px solid #1d4c73; border-radius: 3px; box-shadow: inset 0 0 0 1px rgba(215,240,255,.6); background: linear-gradient(135deg, rgba(255,255,255,.4), rgba(255,255,255,.12) 50%, rgba(255,255,255,.02) 51%, rgba(255,255,255,.1)); }
.task.on { background: linear-gradient(135deg, rgba(255,255,255,.9), rgba(255,255,255,.5) 50%, rgba(255,255,255,.4)); }
.wp { font: bold 17px "Liberation Serif", serif; fill: #e07b1a; }
.tray { margin-left: auto; display: flex; align-items: center; height: 39px; color: #fff; font: 12px/19px "Open Sans", "Noto Sans", sans-serif; }
.lang { width: 31px; margin-bottom: 7px; letter-spacing: -.5px; }
.more { border: 4px solid transparent; border-top: 0; border-bottom: 5px solid #fff; margin: 4px 14px 0 0; }
.flag { margin: 4px 8px 0 0; }
.bars { margin: 3px 7px 0 0; }
.vol { margin: 4px 13px 0 0; }
.clock { width: 58px; display: flex; flex-direction: column; text-align: center; letter-spacing: -.5px; margin: 1px 8px 0 0; }
.desk { width: 14px; height: 39px; border: 1px solid #0d2340; border-radius: 2px; box-shadow: inset 0 0 0 1px rgba(180,205,235,.5); background: linear-gradient(135deg, #6382a8, #1b3a66 60%); }
```
